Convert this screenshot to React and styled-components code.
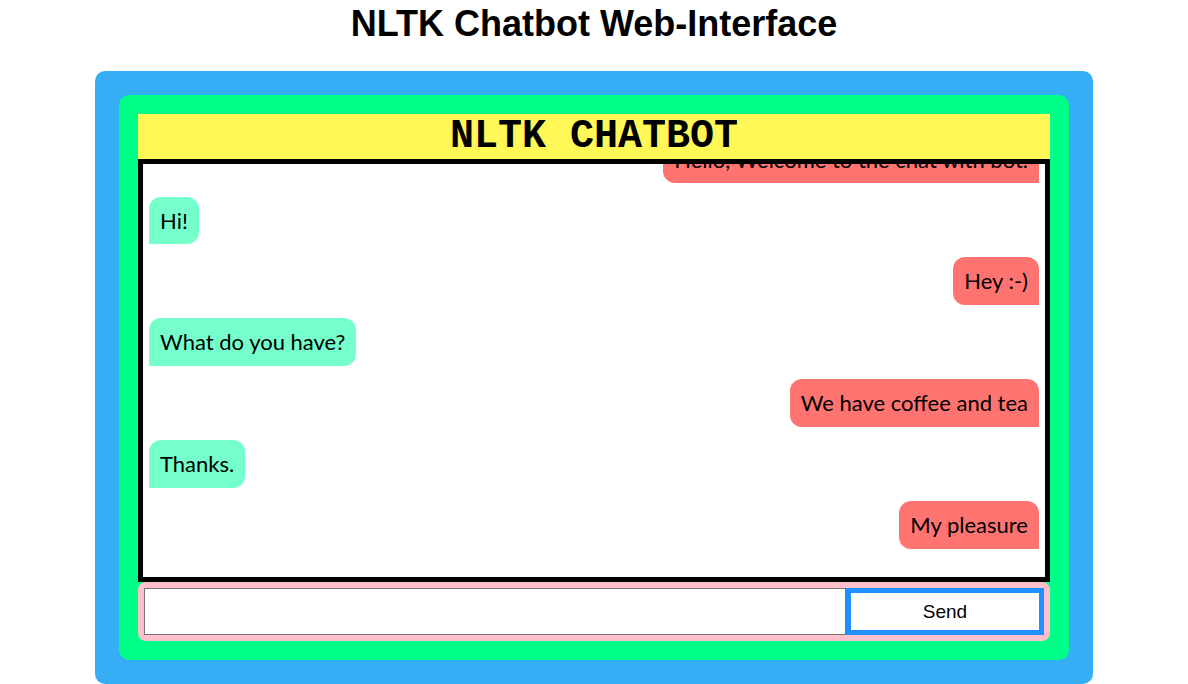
import React from 'react'
import styled, {createGlobalStyle} from 'styled-components'

const messages = [
  {from: 'bot', text: 'Hello, Welcome to the chat with bot.'},
  {from: 'user', text: 'Hi!'},
  {from: 'bot', text: 'Hey :-)'},
  {from: 'user', text: 'What do you have?'},
  {from: 'bot', text: 'We have coffee and tea'},
  {from: 'user', text: 'Thanks.'},
  {from: 'bot', text: 'My pleasure'}
]

const GlobalStyle = createGlobalStyle`
  html, body {
    margin: 0;
    padding: 0;
    background: #ffffff;
    overflow: hidden;
  }
  * {
    box-sizing: border-box;
  }
`

export default function App() {
  return (
    <Page>
      <GlobalStyle />
      <Title>NLTK Chatbot Web-Interface</Title>
      <Frame>
        <Panel>
          <Header>NLTK CHATBOT</Header>
          <ChatBox>
            {messages.map((m, i) => (
              <Row key={i} from={m.from}>
                <Bubble from={m.from}>{m.text}</Bubble>
              </Row>
            ))}
          </ChatBox>
          <InputBar>
            <TextInput type="text" />
            <SendButton type="button">Send</SendButton>
          </InputBar>
        </Panel>
      </Frame>
    </Page>
  )
}

const Page = styled.div`
  display: flex;
  flex-direction: column;
  align-items: center;
  padding-top: 3px;
`

const Title = styled.h1`
  margin: 0 0 26px 0;
  font-family: 'Liberation Sans', Arial, sans-serif;
  font-weight: bold;
  font-size: 36px;
  color: #000;
`

const Frame = styled.div`
  width: 998px;
  padding: 24px;
  background: #36aef6;
  border-radius: 10px;
`

const Panel = styled.div`
  display: flex;
  flex-direction: column;
  padding: 19px;
  background: #00ff88;
  border-radius: 10px;
`

const Header = styled.div`
  height: 45px;
  background: #fff857;
  font-family: 'Liberation Mono', 'Courier New', monospace;
  font-weight: bold;
  font-size: 40px;
  line-height: 45px;
  text-align: center;
  color: #000;
`

const ChatBox = styled.div`
  height: 423px;
  border: 5px solid #000;
  background: #fff;
  display: flex;
  flex-direction: column;
  justify-content: flex-end;
  gap: 13.4px;
  padding: 0 6px 28.5px 6px;
  overflow: hidden;
`

const Row = styled.div`
  display: flex;
  flex-shrink: 0;
  justify-content: ${props => (props.from === 'user' ? 'flex-start' : 'flex-end')};
`

const Bubble = styled.div`
  padding: 10px 11px;
  font-family: 'Gill Sans', Lato, 'Noto Sans', sans-serif;
  font-size: 22px;
  line-height: 27.5px;
  color: #000;
  background: ${props => (props.from === 'user' ? '#74ffcb' : '#ff7470')};
  border-radius: ${props => (props.from === 'user' ? '12px 12px 12px 0' : '12px 12px 0 12px')};
`

const InputBar = styled.div`
  display: flex;
  padding: 6px;
  background: #ffc0cb;
  border-radius: 8px;
`

const TextInput = styled.input`
  width: 78%;
  height: 47px;
  margin: 0;
  border: 1px solid #767676;
  padding: 0 6px;
  font-size: 18px;
  outline: none;
`

const SendButton = styled.button`
  width: 22%;
  height: 47px;
  margin: 0;
  border: 5px solid #1e90ff;
  background: #fff;
  font-family: 'Liberation Sans', Arial, sans-serif;
  font-size: 19px;
  color: #000;
`
